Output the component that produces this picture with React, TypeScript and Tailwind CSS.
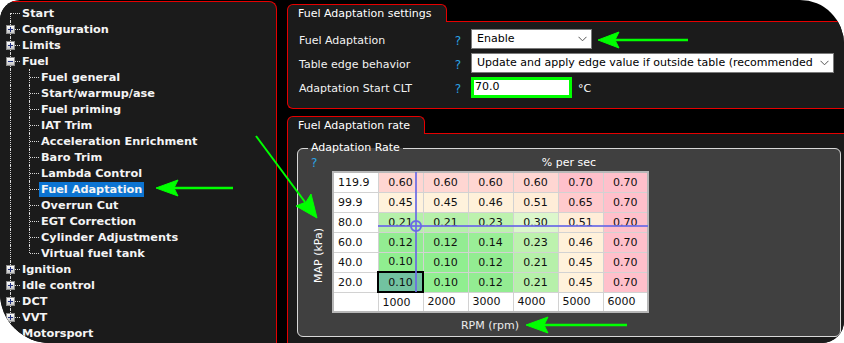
import type { ReactNode } from "react";

type TreeItem = {
  label: string;
  level: 0 | 1;
  box?: "+" | "-";
};

const treeItems: TreeItem[] = [
  { label: "Start", level: 0 },
  { label: "Configuration", level: 0, box: "+" },
  { label: "Limits", level: 0, box: "+" },
  { label: "Fuel", level: 0, box: "-" },
  { label: "Fuel general", level: 1 },
  { label: "Start/warmup/ase", level: 1 },
  { label: "Fuel priming", level: 1 },
  { label: "IAT Trim", level: 1 },
  { label: "Acceleration Enrichment", level: 1 },
  { label: "Baro Trim", level: 1 },
  { label: "Lambda Control", level: 1 },
  { label: "Fuel Adaptation", level: 1 },
  { label: "Overrun Cut", level: 1 },
  { label: "EGT Correction", level: 1 },
  { label: "Cylinder Adjustments", level: 1 },
  { label: "Virtual fuel tank", level: 1 },
  { label: "Ignition", level: 0, box: "+" },
  { label: "Idle control", level: 0, box: "+" },
  { label: "DCT", level: 0, box: "+" },
  { label: "VVT", level: 0, box: "+" },
  { label: "Motorsport", level: 0 },
];

const tableRows: [string, string[]][] = [
  ["119.9", ["0.60", "0.60", "0.60", "0.60", "0.70", "0.70"]],
  ["99.9", ["0.45", "0.45", "0.46", "0.51", "0.65", "0.70"]],
  ["80.0", ["0.21", "0.21", "0.23", "0.30", "0.51", "0.70"]],
  ["60.0", ["0.12", "0.12", "0.14", "0.23", "0.46", "0.70"]],
  ["40.0", ["0.10", "0.10", "0.12", "0.21", "0.45", "0.70"]],
  ["20.0", ["0.10", "0.10", "0.12", "0.21", "0.45", "0.70"]],
];

const rpmAxis = ["1000", "2000", "3000", "4000", "5000", "6000"];

const cellBg: Record<string, string> = {
  "0.10": "bg-[#90ee90]",
  "0.12": "bg-[#93ec92]",
  "0.14": "bg-[#9aee97]",
  "0.21": "bg-[#b6f0aa]",
  "0.23": "bg-[#bdf2ae]",
  "0.30": "bg-[#dcf7cc]",
  "0.45": "bg-[#fff2dc]",
  "0.46": "bg-[#fff1da]",
  "0.51": "bg-[#ffedd8]",
  "0.60": "bg-[#ffd6d2]",
  "0.65": "bg-[#ffcacd]",
  "0.70": "bg-[#ffc0cb]",
};

function ExpandBox({ kind }: { kind: "+" | "-" }) {
  return (
    <span className="absolute left-[6px] top-[4px] z-10 flex h-[9px] w-[9px] items-center justify-center border border-[#8e8e8e] bg-[linear-gradient(180deg,#ffffff,#c4c4c4)]">
      <span className="absolute h-px w-[5px] bg-[#1f2f80]" />
      {kind === "+" ? <span className="absolute h-[5px] w-px bg-[#1f2f80]" /> : null}
    </span>
  );
}

function Tree() {
  const lastChildIndex = 15;
  return (
    <div className="pt-[3px]">
      {treeItems.map((item, index) => {
        const isFirst = index === 0;
        const isLast = index === treeItems.length - 1;
        const selected = item.label === "Fuel Adaptation";
        return (
          <div key={item.label} className="relative flex h-[16px] items-center">
            <span
              className={`absolute left-[10px] border-l border-dotted border-[#d8d8d8] ${
                isFirst ? "top-[8px] bottom-0" : isLast ? "top-0 h-[8px]" : "inset-y-0"
              }`}
            />
            {item.level === 0 ? (
              <span className="absolute left-[11px] top-[8px] w-[9px] border-t border-dotted border-[#d8d8d8]" />
            ) : (
              <>
                <span
                  className={`absolute left-[29px] border-l border-dotted border-[#d8d8d8] ${
                    index === lastChildIndex ? "top-0 h-[8px]" : "inset-y-0"
                  }`}
                />
                <span className="absolute left-[30px] top-[8px] w-[9px] border-t border-dotted border-[#d8d8d8]" />
              </>
            )}
            {item.box ? <ExpandBox kind={item.box} /> : null}
            <span
              className={`${item.level === 0 ? "ml-[20px]" : "ml-[39px]"} h-[15px] px-[2px] text-[11.3px] font-bold leading-[15px] text-[#f4f4f4] ${
                selected ? "bg-[#0c74d2]" : ""
              }`}
            >
              {item.label}
            </span>
          </div>
        );
      })}
    </div>
  );
}

function Tab({ label, className }: { label: string; className: string }) {
  return (
    <div className="flex">
      <div
        className={`relative z-10 -mb-px h-[18px] rounded-t-[6px] border border-b-0 border-[#e60000] bg-[#1b1b1b] pl-[10px] text-[11px] leading-[17px] text-white ${className}`}
      >
        {label}
      </div>
    </div>
  );
}

function Chevron() {
  return (
    <svg width="9" height="6" viewBox="0 0 9 6" className="shrink-0">
      <path d="M0.5 0.8 L4.5 4.8 L8.5 0.8" fill="none" stroke="#555" strokeWidth="1" />
    </svg>
  );
}

function SettingRow({ label, children }: { label: string; children: ReactNode }) {
  return (
    <div className="mb-[4px] flex h-[20px] items-center">
      <span className="mt-[4px] w-[150px] text-[11px] text-[#f2f2f2]">{label}</span>
      <span className="mt-[4px] w-[18px] text-center text-[12px] text-[#2aa2e4]">?</span>
      <div className="ml-[4px] flex h-full items-center">{children}</div>
    </div>
  );
}

function RateTable() {
  return (
    <div className="relative">
      <table className="border-collapse border-2 border-[#b8b8b8] text-[11px] leading-none text-[#101010]">
        <tbody>
          {tableRows.map(([label, values], rowIndex) => (
            <tr key={label}>
              <td className="h-[20px] w-[45px] border border-[#d2d2d2] bg-white p-0 pl-[4px]">{label}</td>
              {values.map((value, colIndex) => {
                const selected = rowIndex === 5 && colIndex === 0;
                return (
                  <td
                    key={colIndex}
                    className={`h-[20px] w-[45px] p-0 text-center ${
                      selected
                        ? "border-2 border-black bg-[#72c2a0]"
                        : `border border-[#d2d2d2] ${cellBg[value]}`
                    }`}
                  >
                    {value}
                  </td>
                );
              })}
            </tr>
          ))}
          <tr>
            <td className="h-[20px] w-[45px] border border-[#d2d2d2] bg-white p-0" />
            {rpmAxis.map((rpm) => (
              <td key={rpm} className="h-[20px] w-[45px] border border-[#d2d2d2] bg-white p-0 pl-[4px]">
                {rpm}
              </td>
            ))}
          </tr>
        </tbody>
      </table>
      <svg className="pointer-events-none absolute left-0 top-0" width="316" height="142">
        <line x1="84" y1="1" x2="84" y2="121" stroke="#6a6ae6" strokeWidth="2" opacity="0.85" />
        <line x1="46" y1="55" x2="316" y2="55" stroke="#6a6ae6" strokeWidth="2" opacity="0.85" />
        <circle cx="84" cy="55" r="5" fill="none" stroke="#6a6ae6" strokeWidth="2" />
      </svg>
    </div>
  );
}

function Arrows() {
  return (
    <svg className="pointer-events-none absolute left-0 top-0" width="844" height="343">
      <g fill="#00ff00" stroke="#00ff00">
        <line x1="615" y1="40" x2="688" y2="40" strokeWidth="2.5" />
        <polygon points="598,40 619,32 615,40 619,48" strokeWidth="1" />
        <line x1="174" y1="188" x2="233" y2="188" strokeWidth="2.5" />
        <polygon points="156,188 178,180 174,188 178,196" strokeWidth="1" />
        <line x1="544" y1="325" x2="627" y2="325" strokeWidth="2.5" />
        <polygon points="526,325 548,317 544,325 548,333" strokeWidth="1" />
        <line x1="256" y1="136" x2="305" y2="202" strokeWidth="2" />
        <polygon points="317,218 311,194 306,202 296,206" strokeWidth="1" />
      </g>
    </svg>
  );
}

export default function App() {
  return (
    <div className="h-[343px] w-[844px] bg-white font-['DejaVu_Sans',sans-serif]">
      <div className="relative flex h-full w-full overflow-hidden rounded-tl-[20px] rounded-tr-[44px] rounded-bl-[50px] rounded-br-[22px] bg-black">
        <aside className="mt-[1px] w-[277px] shrink-0 rounded-tr-[8px] border-r border-t border-[#e60000] bg-[#1b1b1b]">
          <Tree />
        </aside>

        <div className="ml-[10px] flex min-w-0 flex-1 flex-col pt-[4px]">
          <Tab label="Fuel Adaptation settings" className="w-[160px]" />
          <div className="h-[88px] rounded-bl-[6px] border border-r-0 border-[#e60000] bg-[#1b1b1b] pl-[11px] pt-[7px]">
            <SettingRow label="Fuel Adaptation">
              <div className="flex h-[20px] w-[121px] items-center justify-between border border-[#7a7a7a] bg-white pl-[5px] pr-[4px] text-[11px] text-black">
                <span>Enable</span>
                <Chevron />
              </div>
            </SettingRow>
            <SettingRow label="Table edge behavior">
              <div className="flex h-[20px] w-[363px] items-center justify-between border border-[#7a7a7a] bg-white pl-[5px] pr-[4px] text-[11px] text-black">
                <span className="truncate">Update and apply edge value if outside table (recommended</span>
                <Chevron />
              </div>
            </SettingRow>
            <SettingRow label="Adaptation Start CLT">
              <div className="flex h-[21px] w-[101px] items-center border-[3px] border-[#00ff00] bg-white pl-[1px] text-[11px] text-black">
                70.0
              </div>
              <span className="ml-[6px] mt-[4px] text-[11px] text-white">°C</span>
            </SettingRow>
          </div>

          <div className="mt-[7px]">
            <Tab label="Fuel Adaptation rate" className="w-[138px]" />
          </div>
          <div className="flex-1 border-l border-t border-[#e60000] bg-[#1b1b1b] pl-[9px] pr-[3px] pt-[7px]">
            <fieldset className="h-[196px] rounded-[6px] border border-[#d8d8d8] bg-[#404040] p-0">
              <legend className="ml-[10px] px-[3px] text-[11px] leading-[14px] text-white">Adaptation Rate</legend>
              <div className="flex h-[16px] items-center">
                <span className="w-[30px] pl-[13px] text-[12px] text-[#2aa2e4]">?</span>
                <span className="flex-1 text-center text-[11px] text-white">% per sec</span>
                <span className="w-[30px]" />
              </div>
              <div className="flex">
                <div className="flex w-[34px] items-start justify-center pl-[6px] pt-[57px]">
                  <span className="rotate-180 text-[11px] leading-none text-white [writing-mode:vertical-rl]">
                    MAP (kPa)
                  </span>
                </div>
                <RateTable />
              </div>
              <div className="ml-[34px] mt-[5px] w-[316px] text-center text-[11px] leading-[16px] text-[#ececec]">
                RPM (rpm)
              </div>
            </fieldset>
          </div>
        </div>

        <Arrows />
      </div>
    </div>
  );
}
